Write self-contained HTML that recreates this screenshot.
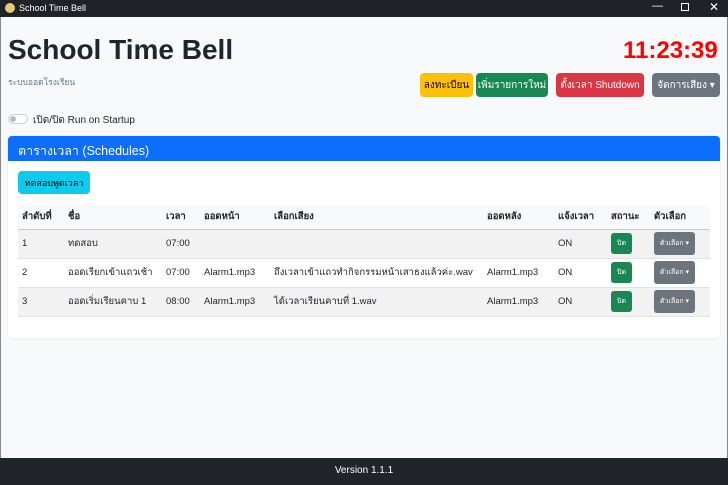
<!DOCTYPE html><html><head><meta charset="utf-8"><style>
*{box-sizing:border-box;margin:0;padding:0}
body{width:728px;height:485px;overflow:hidden;background:#f8f9fa;font-family:"Liberation Sans","DejaVu Sans",sans-serif;position:relative;color:#212529}
.tb{position:absolute;left:0;top:0;width:728px;height:17px;background:#1f2226;color:#fff;font-size:9px}
.abs{position:absolute}
.btn{position:absolute;height:24px;border-radius:4px;font-size:10px;display:flex;align-items:center;justify-content:center;color:#fff}
table{position:absolute;left:18px;top:205px;width:692px;border-collapse:collapse;font-size:9.5px}
td,th{height:29px;text-align:left;padding-left:4px;border-bottom:1px solid #dee2e6}
th{height:24px;font-weight:bold;border-bottom:1.5px solid #ccc}
tr.s td{background:#f2f2f2}
.on{display:inline-block;background:#198754;color:#fff;font-size:7px;padding:5px 6px;border-radius:3px}
.op{display:inline-block;background:#6c757d;color:#fff;font-size:7px;padding:6px 6px;border-radius:3px}
</style></head><body>
<div class="tb"><span class="abs" style="left:5px;top:3px;width:10px;height:10px;border-radius:50%;background:#e8c872"></span><span class="abs" style="left:19px;top:3px">School Time Bell</span>
<span class="abs" style="left:652px;top:0;font-size:11px">—</span><span class="abs" style="left:681px;top:3px;width:8px;height:8px;border:1px solid #fff"></span><span class="abs" style="left:709px;top:0;font-size:12px">✕</span></div>
<div class="abs" style="left:0;top:17px;width:1px;height:441px;background:#888"></div>
<div class="abs" style="right:0;top:17px;width:1px;height:441px;background:#888"></div>
<div class="abs" style="left:8px;top:34px;font-size:28px;font-weight:bold">School Time Bell</div>
<div class="abs" style="left:8px;top:75px;font-size:8.5px;color:#6c757d">ระบบออดโรงเรียน</div>
<div class="abs" style="left:623px;top:37px;font-size:24px;font-weight:bold;color:#f00">11:23:39</div>
<div class="btn" style="left:420px;top:73px;width:53px;background:#ffc107;color:#000">ลงทะเบียน</div>
<div class="btn" style="left:476px;top:73px;width:72px;background:#198754">เพิ่มรายการใหม่</div>
<div class="btn" style="left:556px;top:73px;width:88px;background:#dc3545">ตั้งเวลา Shutdown</div>
<div class="btn" style="left:652px;top:73px;width:68px;background:#6c757d">จัดการเสียง ▾</div>
<div class="abs" style="left:8px;top:114px;width:20px;height:10px;border:1px solid #ccc;border-radius:6px;background:#fff"><div style="margin:1px;width:6px;height:6px;border-radius:50%;background:#bbb"></div></div>
<div class="abs" style="left:33px;top:113px;font-size:10px">เปิด/ปิด Run on Startup</div>
<div class="abs" style="left:8px;top:136px;width:712px;height:202px;background:#fff;border-radius:4px;box-shadow:0 0 2px #ddd"></div>
<div class="abs" style="left:8px;top:136px;width:712px;height:25px;background:#0d6efd;border-radius:4px 4px 0 0;color:#fff;font-size:12.5px;padding:5px 10px">ตารางเวลา (Schedules)</div>
<div class="btn" style="left:18px;top:171px;width:72px;height:23px;background:#0dcaf0;color:#000;font-size:9px">ทดสอบพูดเวลา</div>
<table>
<tr style="background:#f8f9fa"><th style="width:46px">ลำดับที่</th><th style="width:98px">ชื่อ</th><th style="width:38px">เวลา</th><th style="width:70px">ออดหน้า</th><th style="width:213px">เลือกเสียง</th><th style="width:71px">ออดหลัง</th><th style="width:53px">แจ้งเวลา</th><th style="width:43px">สถานะ</th><th>ตัวเลือก</th></tr>
<tr class="s"><td>1</td><td>ทดสอบ</td><td>07:00</td><td></td><td></td><td></td><td>ON</td><td><span class="on">ปิด</span></td><td><span class="op">ตัวเลือก ▾</span></td></tr>
<tr><td>2</td><td>ออดเรียกเข้าแถวเช้า</td><td>07:00</td><td>Alarm1.mp3</td><td>ถึงเวลาเข้าแถวทำกิจกรรมหน้าเสาธงแล้วค่ะ.wav</td><td>Alarm1.mp3</td><td>ON</td><td><span class="on">ปิด</span></td><td><span class="op">ตัวเลือก ▾</span></td></tr>
<tr class="s"><td>3</td><td>ออดเริ่มเรียนคาบ 1</td><td>08:00</td><td>Alarm1.mp3</td><td>ได้เวลาเรียนคาบที่ 1.wav</td><td>Alarm1.mp3</td><td>ON</td><td><span class="on">ปิด</span></td><td><span class="op">ตัวเลือก ▾</span></td></tr>
</table>
<div class="abs" style="left:0;top:458px;width:728px;height:27px;background:#212529;color:#fff;font-size:10px;text-align:center;line-height:26px">Version 1.1.1</div>
</body></html>
